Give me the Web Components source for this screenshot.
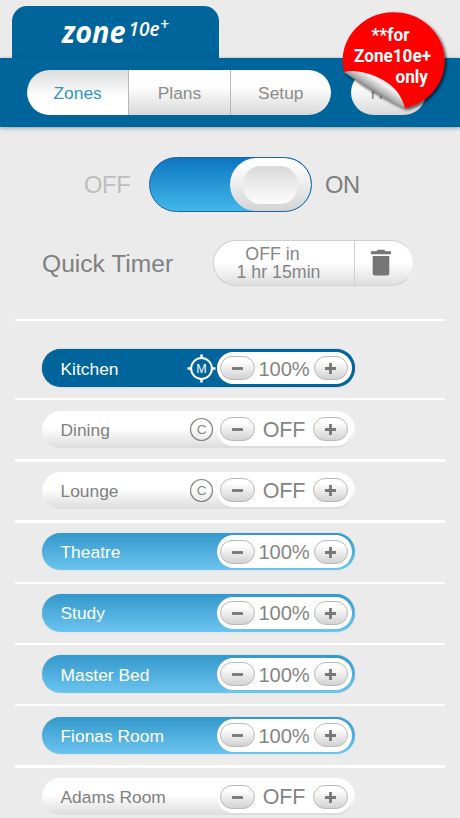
<!DOCTYPE html>
<html lang="en">
<head>
<meta charset="utf-8">
<meta name="viewport" content="width=device-width, initial-scale=1">
<title>Zones</title>
<style>
  html, body {
    margin: 0;
    height: 818px;
    overflow: hidden;
    background: #ebebeb;
    font-family: "Liberation Sans", Arial, sans-serif;
    color: #808080;
  }
</style>
</head>
<body>
<zone-app></zone-app>

<script>
customElements.define('zone-logo', class ZoneLogo extends HTMLElement {
  constructor() {
    super();
    this.attachShadow({mode: 'open'});
    this.shadowRoot.innerHTML = this.template;
  }

  get template() {
    return `<style>
      :host {
        display: block;
        width: 207px;
        height: 52px;
        margin-left: 12px;
        border-radius: 15px 15px 0 0;
        background: #00659b;
      }
      svg {
        display: block;
      }
      text {
        font-family: "Open Sans", "Noto Sans", sans-serif;
        font-style: italic;
        fill: #fff;
      }
    </style>
    <svg width="207" height="52">
      <text x="50" y="36.5" font-size="29.5" font-weight="700" textLength="63.5" lengthAdjust="spacingAndGlyphs">zone</text>
      <text x="116.5" y="29.8" font-size="19.5" font-weight="600" textLength="31" lengthAdjust="spacingAndGlyphs">10e</text>
      <text x="148" y="24" font-size="16" font-weight="600" textLength="9" lengthAdjust="spacingAndGlyphs">+</text>
    </svg>`;
  }
});

customElements.define('nav-tab', class NavTab extends HTMLElement {
  constructor() {
    super();
    this.attachShadow({mode: 'open'});
    this.shadowRoot.innerHTML = this.template;
  }

  get template() {
    return `<style>
      :host {
        display: flex;
        align-items: center;
        justify-content: center;
        box-sizing: border-box;
        height: 45px;
        padding-top: 2px;
        font-size: 17.4px;
        color: #8c8c8c;
        background: linear-gradient(#fff 35%, #d9d9d9);
      }
      :host([active]) {
        color: #3393c8;
        background: linear-gradient(#dcdcdc, #fff 60%);
      }
      :host(:not(:first-child)) {
        border-left: 1px solid #b5b8ba;
      }
    </style>
    <slot></slot>`;
  }
});

customElements.define('nav-group', class NavGroup extends HTMLElement {
  constructor() {
    super();
    this.attachShadow({mode: 'open'});
    this.shadowRoot.innerHTML = this.template;
  }

  get template() {
    return `<style>
      :host {
        display: grid;
        grid-auto-flow: column;
        grid-auto-columns: 1fr;
        height: 45px;
        border-radius: 23px;
        overflow: hidden;
      }
    </style>
    <slot></slot>`;
  }
});

customElements.define('promo-sticker', class PromoSticker extends HTMLElement {
  constructor() {
    super();
    this.attachShadow({mode: 'open'});
    this.shadowRoot.innerHTML = this.template;
  }

  get template() {
    return `<style>
      :host {
        display: block;
        width: 120px;
        height: 115px;
      }
      svg {
        display: block;
        overflow: visible;
      }
      text {
        font-family: Roboto, sans-serif;
        font-weight: 700;
        font-size: 17.5px;
        fill: #fff;
      }
    </style>
    <svg width="120" height="115" viewBox="335 5 120 115">
      <defs>
        <linearGradient id="peel" gradientUnits="userSpaceOnUse" x1="371" y1="92" x2="383" y2="73">
          <stop offset="0" stop-color="#6f6f6f"/>
          <stop offset=".25" stop-color="#b5b5b5"/>
          <stop offset=".6" stop-color="#f4f4f4"/>
          <stop offset="1" stop-color="#b4b4b4"/>
        </linearGradient>
        <filter id="drop" x="-20%" y="-20%" width="140%" height="140%">
          <feDropShadow dx="2" dy="2" stdDeviation="1.5" flood-opacity=".65"/>
        </filter>
      </defs>
      <g filter="url(#drop)">
        <path d="M344 72A51 48.5 0 1 1 405 108Z" fill="#f00"/>
        <path d="M344 72C354 69 371 73 383 80C396 87 402 97 405 108C388 101 366 88 344 72Z" fill="url(#peel)"/>
      </g>
      <text x="371.5" y="41" textLength="38" lengthAdjust="spacingAndGlyphs">**for</text>
      <text x="354" y="62" textLength="77" lengthAdjust="spacingAndGlyphs">Zone10e+</text>
      <text x="395.5" y="83" textLength="32.5" lengthAdjust="spacingAndGlyphs">only</text>
    </svg>`;
  }
});

customElements.define('power-switch', class PowerSwitch extends HTMLElement {
  constructor() {
    super();
    this.attachShadow({mode: 'open'});
    this.shadowRoot.innerHTML = this.template;
  }

  get template() {
    return `<style>
      :host {
        display: flex;
        align-items: center;
        height: 55px;
        font-size: 23.7px;
      }
      span {
        padding-top: 2px;
        letter-spacing: -.3px;
      }
      .off {
        width: 64.5px;
        color: #bdbdbd;
      }
      .on {
        margin-left: 13.5px;
        color: #7d7d7d;
      }
      .track {
        display: flex;
        justify-content: flex-end;
        box-sizing: border-box;
        width: 163px;
        height: 55px;
        border: 1px solid #1e62a8;
        border-radius: 28px;
        background: linear-gradient(#0c75c0, #42b8ea);
        overflow: hidden;
      }
      .knob {
        display: grid;
        place-items: center;
        width: 81px;
        height: 53px;
        border-radius: 27px;
        background: linear-gradient(#fff 10%, #d4d4d4);
      }
      .dish {
        width: 55px;
        height: 38px;
        border-radius: 18px;
        background: linear-gradient(#d9d9d9, #fafafa 90%);
      }
    </style>
    <span class="off">OFF</span>
    <div class="track"><div class="knob"><div class="dish"></div></div></div>
    <span class="on">ON</span>`;
  }
});

customElements.define('quick-timer', class QuickTimer extends HTMLElement {
  constructor() {
    super();
    this.attachShadow({mode: 'open'});
    this.shadowRoot.innerHTML = this.template;
  }

  get template() {
    return `<style>
      :host {
        display: flex;
        align-items: center;
        height: 46px;
      }
      .label {
        width: 171px;
        padding-top: 2px;
        font-size: 24.6px;
        white-space: nowrap;
      }
      .pill {
        display: grid;
        grid-template-columns: 141px 1fr;
        box-sizing: border-box;
        width: 201px;
        height: 46px;
        border: 1px solid #cfcfcf;
        border-right-color: #e6e6e6;
        border-radius: 23px;
        background: linear-gradient(#fff 50%, #dedede);
      }
      .time {
        display: flex;
        flex-direction: column;
        align-items: center;
        padding: 4px 11px 0 0;
        border-right: 1px solid #cfcfcf;
        font-size: 17.8px;
        line-height: 18px;
        color: #858585;
        white-space: nowrap;
      }
      .time span:first-child {
        padding-right: 12px;
      }
      svg {
        margin: 8px 0 0 16px;
      }
    </style>
    <span class="label">Quick Timer</span>
    <div class="pill">
      <div class="time"><span>OFF in</span><span>1 hr 15min</span></div>
      <svg width="20" height="28" viewBox="0 0 20 28" fill="#757575">
        <path d="M0 2.2H5.3L7 .8H13L14.7 2.2H20V5.2H0ZM1.7 7H18.3V24Q18.3 26.5 15.8 26.5H4.2Q1.7 26.5 1.7 24Z"/>
      </svg>
    </div>`;
  }
});

customElements.define('step-button', class StepButton extends HTMLElement {
  constructor() {
    super();
    this.attachShadow({mode: 'open'});
    this.shadowRoot.innerHTML = this.template;
  }

  get template() {
    const plus = this.getAttribute('kind') === 'plus' ? 'M11.5 6V17' : '';
    return `<style>
      :host {
        display: grid;
        place-items: center;
        box-sizing: border-box;
        width: 34.5px;
        height: 24px;
        border: 1px solid #b9b9b9;
        border-radius: 12px;
        background: linear-gradient(#fff 20%, #d2d2d2);
      }
    </style>
    <svg width="23" height="23"><path d="M6 11.5H17${plus}" stroke="#777" stroke-width="2.8"/></svg>`;
  }
});

customElements.define('sensor-badge', class SensorBadge extends HTMLElement {
  constructor() {
    super();
    this.attachShadow({mode: 'open'});
    this.shadowRoot.innerHTML = this.template;
  }

  get template() {
    const kind = this.getAttribute('kind');
    const ring = kind === 'M'
      ? '<circle cx="14.5" cy="14.5" r="10.4" stroke-width="2"/><path d="M14.5 .5V5M14.5 24V28.5M.5 14.5H5M24 14.5H28.5" stroke-width="2.6"/>'
      : '<circle cx="14.5" cy="14.5" r="11" stroke-width="1.2"/>';
    return `<style>
      :host {
        display: block;
        color: ${kind === 'M' ? '#fff' : '#858585'};
      }
      svg {
        display: block;
      }
      text {
        font-size: ${kind === 'M' ? 12.5 : 13.5}px;
        text-anchor: middle;
        fill: currentColor;
        stroke: none;
      }
    </style>
    <svg width="29" height="29" fill="none" stroke="currentColor">
      ${ring}
      <text x="14.5" y="19">${kind}</text>
    </svg>`;
  }
});

customElements.define('zone-row', class ZoneRow extends HTMLElement {
  constructor() {
    super();
    this.attachShadow({mode: 'open'});
    this.shadowRoot.innerHTML = this.template;
  }

  get template() {
    const sensor = this.getAttribute('sensor');
    const value = this.getAttribute('value');
    return `<style>
      :host {
        display: block;
        box-sizing: border-box;
        height: 61.22px;
        padding: 0 26.5px;
      }
      .pill {
        display: flex;
        align-items: center;
        box-sizing: border-box;
        width: 313px;
        height: 37.5px;
        padding: 0 2.5px 0 19px;
        border-radius: 19px;
        font-size: 17.4px;
        color: #7f7f7f;
        background: linear-gradient(#fff 45%, #dcdcdc);
      }
      :host([state="on"]) .pill {
        color: #fff;
        background: linear-gradient(#3398cb, #6cc4ef);
        box-shadow: 0 0 1px #7ba;
      }
      :host([state="master"]) .pill {
        color: #fff;
        background: #00659b;
        box-shadow: 0 0 1px #468;
      }
      .name {
        flex: 1;
        padding-top: 2px;
        white-space: nowrap;
      }
      sensor-badge {
        margin-right: 1px;
      }
      .control {
        display: flex;
        align-items: center;
        justify-content: space-between;
        box-sizing: border-box;
        width: 135px;
        height: 32.5px;
        padding: 0 4px 0 3px;
        border-radius: 17px;
        background: #fff;
      }
      .value {
        padding-top: 2px;
        font-size: ${value === 'OFF' ? 21.5 : 20.2}px;
        letter-spacing: -.2px;
        color: #858585;
      }
      .line {
        height: 2.4px;
        margin: 11.2px -26.5px 0;
        background: #fff;
      }
    </style>
    <div class="pill">
      <span class="name"><slot></slot></span>
      ${sensor ? `<sensor-badge kind="${sensor}"></sensor-badge>` : ''}
      <div class="control">
        <step-button kind="minus"></step-button>
        <span class="value">${value}</span>
        <step-button kind="plus"></step-button>
      </div>
    </div>
    <div class="line"></div>`;
  }
});

customElements.define('zone-app', class ZoneApp extends HTMLElement {
  constructor() {
    super();
    this.attachShadow({mode: 'open'});
    this.shadowRoot.innerHTML = this.template;
  }

  get template() {
    return `<style>
      :host {
        display: block;
        position: relative;
        width: 460px;
        height: 818px;
        overflow: hidden;
      }
      header {
        padding-top: 6px;
      }
      nav {
        display: flex;
        gap: 20px;
        height: 57px;
        padding: 12px 0 0 27px;
        background: #00659b;
        box-shadow: 0 1px 4px rgba(0, 40, 70, .4);
      }
      .main {
        width: 304px;
      }
      .help {
        width: 75px;
      }
      promo-sticker {
        position: absolute;
        left: 335px;
        top: 5px;
      }
      power-switch {
        margin: 30px 0 0 84px;
      }
      quick-timer {
        margin: 28px 0 0 42px;
      }
      .list {
        margin: 32.7px 15px 0;
        padding-top: 28.6px;
        border-top: 2px solid #fff;
      }
    </style>
    <header>
      <zone-logo></zone-logo>
      <nav>
        <nav-group class="main">
          <nav-tab active>Zones</nav-tab>
          <nav-tab>Plans</nav-tab>
          <nav-tab>Setup</nav-tab>
        </nav-group>
        <nav-group class="help"><nav-tab>Help</nav-tab></nav-group>
      </nav>
    </header>
    <power-switch></power-switch>
    <quick-timer></quick-timer>
    <div class="list">
      <zone-row state="master" sensor="M" value="100%">Kitchen</zone-row>
      <zone-row sensor="C" value="OFF">Dining</zone-row>
      <zone-row sensor="C" value="OFF">Lounge</zone-row>
      <zone-row state="on" value="100%">Theatre</zone-row>
      <zone-row state="on" value="100%">Study</zone-row>
      <zone-row state="on" value="100%">Master Bed</zone-row>
      <zone-row state="on" value="100%">Fionas Room</zone-row>
      <zone-row value="OFF">Adams Room</zone-row>
    </div>
    <promo-sticker></promo-sticker>`;
  }
});
</script>
</body>
</html>
